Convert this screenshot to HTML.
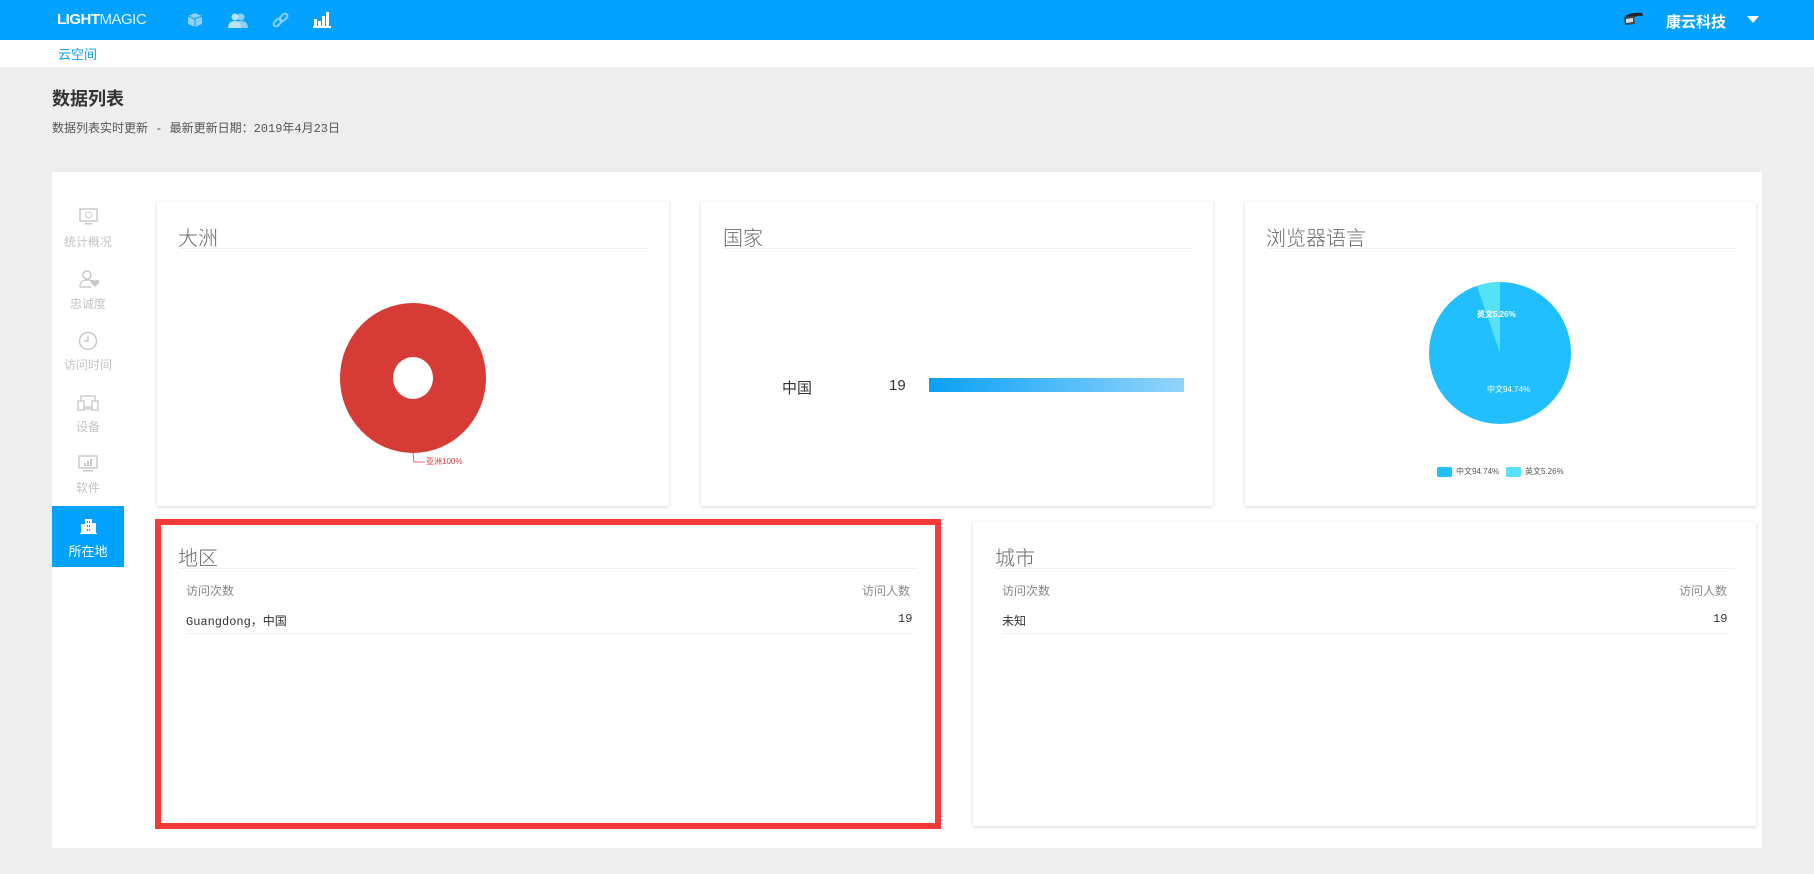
<!DOCTYPE html>
<html><head><meta charset="utf-8"><style>
*{margin:0;padding:0;box-sizing:border-box}
body{width:1814px;height:874px;background:#eeeeee;font-family:"Liberation Sans","Noto Sans CJK SC",sans-serif;position:relative;overflow:hidden}
.a{position:absolute}
.hdr{left:0;top:0;width:1814px;height:40px;background:#02a2fe}
.crumb{left:0;top:40px;width:1814px;height:27px;background:#fff}
.panel{left:52px;top:172px;width:1710px;height:676px;background:#fff}
.card{background:#fff;box-shadow:0 1px 4px rgba(0,0,0,.16)}
.ttl{font-size:20px;color:#6a6a6a;font-weight:300}
.ul{height:1px;background:#f0f0f0}
.side{width:72px;text-align:center;font-size:12px;color:#c4c4c4;left:52px}
.mono{font-family:"Liberation Mono","Noto Sans CJK SC",monospace}
</style></head><body>
<div class="a hdr"></div>
<div class="a" style="left:57px;top:11px;color:#fff;font-size:15px;letter-spacing:-0.5px"><b style="font-weight:900">LIGHT</b><span style="font-weight:300;opacity:.85">MAGIC</span></div>
<!-- header icons -->
<svg class="a" style="left:187px;top:12px" width="16" height="16" viewBox="0 0 16 16"><path d="M8 1L15 4V12L8 15L1 12V4Z" fill="#8fd0f8"/><path d="M8 7V15M1 4L8 7L15 4" stroke="#02a2fe" stroke-width="1" fill="none"/></svg>
<svg class="a" style="left:228px;top:12px" width="20" height="16" viewBox="0 0 20 16"><circle cx="13" cy="5" r="3.5" fill="#8fd0f8"/><path d="M6 16C6 11 9 9 13 9S20 11 20 16Z" fill="#8fd0f8"/><circle cx="7" cy="5" r="3.5" fill="#b8e2fb"/><path d="M0 16C0 11 3 9 7 9S13 11 13 16Z" fill="#b8e2fb"/></svg>
<svg class="a" style="left:272px;top:12px" width="17" height="17" viewBox="0 0 17 17"><g fill="none" stroke="#8fd0f8" stroke-width="2"><rect x="1" y="8" width="9" height="5" rx="2.5" transform="rotate(-45 5.5 10.5)"/><rect x="7" y="3" width="9" height="5" rx="2.5" transform="rotate(-45 11.5 5.5)"/></g></svg>
<svg class="a" style="left:313px;top:11px" width="18" height="17" viewBox="0 0 18 17"><g fill="#fff"><rect x="0" y="15" width="18" height="2"/><rect x="1" y="8" width="3" height="7"/><rect x="5" y="10" width="3" height="5"/><rect x="9" y="5" width="3" height="10"/><rect x="13" y="1" width="3" height="14"/></g></svg>
<svg class="a" style="left:1622px;top:11px" width="22" height="16" viewBox="0 0 22 16"><path d="M3 5Q10 1 20 2L21 5Q14 4 10 8Z" fill="#222"/><path d="M2 6L12 5L13 13L3 14Z" fill="#444"/><path d="M4 8L11 7L11 11L4 12Z" fill="#ddd"/></svg>
<div class="a" style="left:1666px;top:11px;color:#fff;font-size:15px;font-weight:bold">康云科技</div>
<svg class="a" style="left:1747px;top:16px" width="12" height="8"><path d="M0 0H12L6 7Z" fill="#fff"/></svg>

<div class="a crumb"></div>
<div class="a" style="left:58px;top:44px;color:#14a0ee;font-size:13px">云空间</div>
<div class="a" style="left:52px;top:85px;color:#333;font-size:18px;font-weight:bold">数据列表</div>
<div class="a mono" style="left:52px;top:119px;color:#555;font-size:12px">数据列表实时更新 - 最新更新日期：2019年4月23日</div>

<div class="a panel"></div>
<!-- sidebar -->
<svg class="a" style="left:79px;top:208px" width="19" height="17" viewBox="0 0 19 17"><rect x="1" y="1" width="17" height="12" fill="none" stroke="#c8c8c8" stroke-width="1.4"/><circle cx="9.5" cy="7" r="3" fill="none" stroke="#c8c8c8"/><rect x="6" y="15" width="7" height="1.5" fill="#c8c8c8"/></svg>
<div class="a side" style="top:233px">统计概况</div>
<svg class="a" style="left:78px;top:270px" width="22" height="18" viewBox="0 0 22 18"><circle cx="9" cy="5" r="4" fill="none" stroke="#c8c8c8" stroke-width="1.4"/><path d="M2 17C2 12 5 10 9 10S14 11 15 13" fill="none" stroke="#c8c8c8" stroke-width="1.4"/><path d="M2 17H13" stroke="#c8c8c8" stroke-width="1.4"/><path d="M17 17L13 13A2 2 0 0 1 17 11A2 2 0 0 1 21 13Z" fill="#c8c8c8"/></svg>
<div class="a side" style="top:295px">忠诚度</div>
<svg class="a" style="left:78px;top:331px" width="20" height="20" viewBox="0 0 20 20"><circle cx="10" cy="10" r="8.5" fill="none" stroke="#c8c8c8" stroke-width="1.4"/><path d="M10 5V10H6" fill="none" stroke="#c8c8c8" stroke-width="1.4"/></svg>
<div class="a side" style="top:356px">访问时间</div>
<svg class="a" style="left:77px;top:395px" width="22" height="16" viewBox="0 0 22 16"><rect x="4" y="1" width="14" height="11" fill="none" stroke="#c8c8c8" stroke-width="1.3"/><rect x="1" y="6" width="6" height="9" fill="#fff" stroke="#c8c8c8" stroke-width="1.3"/><rect x="15" y="6" width="6" height="9" fill="#fff" stroke="#c8c8c8" stroke-width="1.3"/><path d="M7 14H15" stroke="#c8c8c8" stroke-width="1.3"/></svg>
<div class="a side" style="top:418px">设备</div>
<svg class="a" style="left:78px;top:455px" width="20" height="18" viewBox="0 0 20 18"><rect x="1" y="1" width="18" height="12" fill="none" stroke="#c8c8c8" stroke-width="1.4"/><g fill="#c8c8c8"><rect x="6" y="8" width="2" height="3"/><rect x="9" y="6" width="2" height="5"/><rect x="12" y="4" width="2" height="7"/><rect x="5" y="15" width="10" height="1.5"/></g></svg>
<div class="a side" style="top:479px">软件</div>
<div class="a" style="left:52px;top:506px;width:72px;height:61px;background:#02a2fe"></div>
<svg class="a" style="left:80px;top:518px" width="17" height="16" viewBox="0 0 17 16"><g fill="#fff"><rect x="5" y="1" width="7" height="14"/><rect x="1" y="6" width="4" height="9"/><rect x="12" y="5" width="4" height="10"/><rect x="0" y="15" width="17" height="1"/></g><g fill="#02a2fe"><rect x="7" y="3" width="1" height="2"/><rect x="9" y="3" width="1" height="2"/><rect x="7" y="7" width="1" height="2"/><rect x="9" y="7" width="1" height="2"/><rect x="7" y="11" width="1" height="2"/><rect x="9" y="11" width="1" height="2"/></g></svg>
<div class="a side" style="top:541px;color:#fff;font-size:13px">所在地</div>

<!-- card1 -->
<div class="a card" style="left:157px;top:202px;width:512px;height:304px"></div>
<div class="a ttl" style="left:178px;top:222px">大洲</div>
<div class="a ul" style="left:178px;top:248px;width:470px"></div>
<svg class="a" style="left:330px;top:300px" width="200" height="170"><ellipse cx="83" cy="78" rx="73" ry="75" fill="#d63b35"/><ellipse cx="83" cy="78" rx="20" ry="21" fill="#fff"/><path d="M83 153L84 162H95" fill="none" stroke="#d63b35" stroke-width="0.8"/><text x="96" y="164" font-size="8" fill="#d63b35" font-family="Liberation Sans,Noto Sans CJK SC,sans-serif">亚洲100%</text></svg>

<!-- card2 -->
<div class="a card" style="left:701px;top:202px;width:512px;height:304px"></div>
<div class="a ttl" style="left:723px;top:222px">国家</div>
<div class="a ul" style="left:723px;top:248px;width:470px"></div>
<div class="a" style="left:782px;top:377px;font-size:15px;color:#333">中国</div>
<div class="a" style="left:889px;top:377px;font-size:15px;color:#333">19</div>
<div class="a" style="left:929px;top:378px;width:255px;height:14px;background:linear-gradient(90deg,#0aa0f6,#93d5fb)"></div>

<!-- card3 -->
<div class="a card" style="left:1245px;top:202px;width:511px;height:304px"></div>
<div class="a ttl" style="left:1266px;top:222px">浏览器语言</div>
<div class="a ul" style="left:1266px;top:248px;width:470px"></div>
<svg class="a" style="left:1420px;top:275px" width="160" height="160"><circle cx="80" cy="78" r="71" fill="#22bfff"/><path d="M80 78L80 7A71 71 0 0 0 56.9 10.9Z" fill="#55e2f7"/><text x="57" y="42" font-size="8" fill="#fff" font-family="Liberation Sans,Noto Sans CJK SC,sans-serif" font-weight="bold">英文5.26%</text><text x="67" y="117" font-size="8" fill="#fff" font-family="Liberation Sans,Noto Sans CJK SC,sans-serif">中文94.74%</text></svg>
<div class="a" style="left:1437px;top:467px;width:15px;height:10px;background:#22bfff;border-radius:2px"></div>
<div class="a" style="left:1456px;top:466px;font-size:8px;color:#555">中文94.74%</div>
<div class="a" style="left:1506px;top:467px;width:15px;height:10px;background:#55e2f7;border-radius:2px"></div>
<div class="a" style="left:1525px;top:466px;font-size:8px;color:#555">英文5.26%</div>

<!-- card4 with red highlight -->
<div class="a card" style="left:157px;top:522px;width:780px;height:304px"></div>
<div class="a" style="left:155px;top:519px;width:786px;height:310px;border:6px solid #f53a3a"></div>
<div class="a ttl" style="left:178px;top:542px">地区</div>
<div class="a ul" style="left:178px;top:568px;width:740px"></div>
<div class="a" style="left:186px;top:582px;font-size:12px;color:#888">访问次数</div>
<div class="a" style="left:862px;top:582px;font-size:12px;color:#888">访问人数</div>
<div class="a mono" style="left:186px;top:612px;font-size:12px;color:#333">Guangdong，中国</div>
<div class="a mono" style="left:898px;top:612px;font-size:12px;color:#333">19</div>
<div class="a ul" style="left:186px;top:633px;width:726px"></div>

<!-- card5 -->
<div class="a card" style="left:973px;top:522px;width:783px;height:304px"></div>
<div class="a ttl" style="left:995px;top:542px">城市</div>
<div class="a ul" style="left:995px;top:568px;width:740px"></div>
<div class="a" style="left:1002px;top:582px;font-size:12px;color:#888">访问次数</div>
<div class="a" style="left:1679px;top:582px;font-size:12px;color:#888">访问人数</div>
<div class="a mono" style="left:1002px;top:612px;font-size:12px;color:#333">未知</div>
<div class="a mono" style="left:1713px;top:612px;font-size:12px;color:#333">19</div>
<div class="a ul" style="left:1002px;top:633px;width:726px"></div>
</body></html>
